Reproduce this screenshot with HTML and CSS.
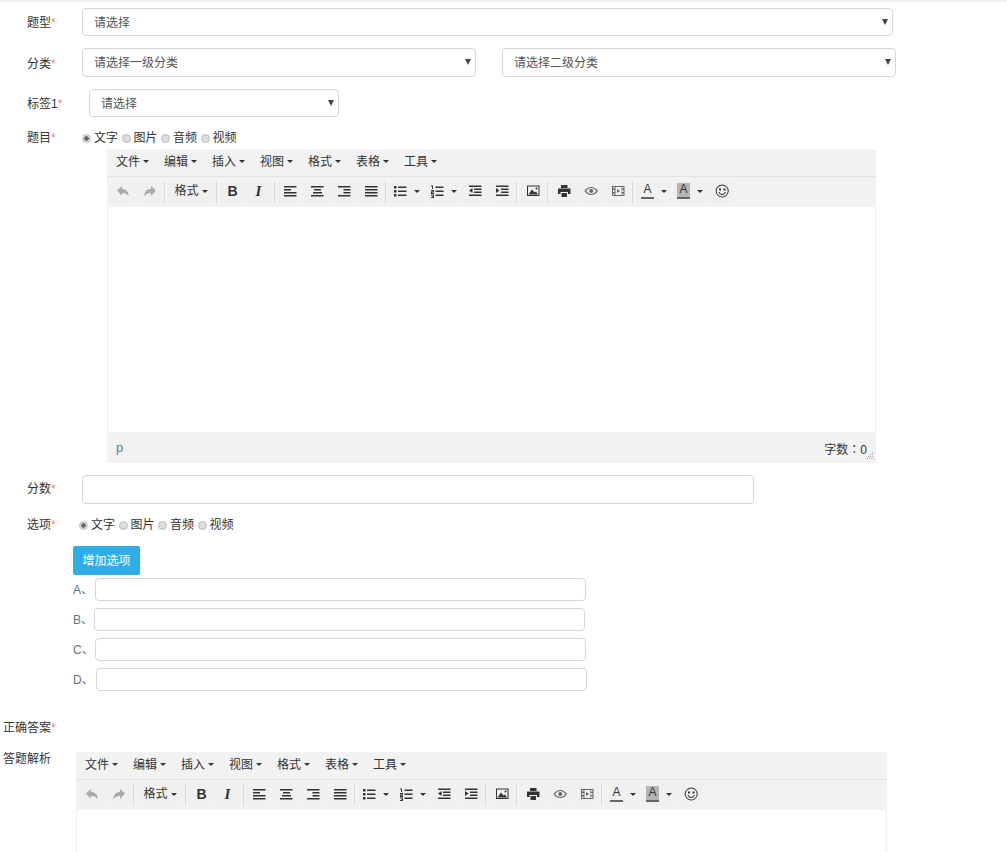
FILE: index.html
```html
<!DOCTYPE html>
<html lang="en">
<head>
  <meta charset="UTF-8">
  <title>添加题目</title>
  <link rel="stylesheet" href="styles.css">
</head>
<body>

  <svg class="sprite" xmlns="http://www.w3.org/2000/svg">
    <symbol id="i-undo" viewBox="0 0 16 16"><path d="M2 7.5 7 3v3c4 0 7 2.500 6.500 7.500C12.500 11 10.500 10 7 10v3z"/></symbol>
    <symbol id="i-redo" viewBox="0 0 16 16"><path d="M14 7.500 9 3v3c-4 0-7 2.500-6.500 7.500C3.500 11 5.500 10 9 10v3z"/></symbol>
    <symbol id="i-left" viewBox="0 0 16 16"><path d="M2 3h12.500v1.500H2zM2 6h7v1.500H2zM2 9h12.500v1.500H2zM2 12h12.500v1.500H2z"/></symbol>
    <symbol id="i-center" viewBox="0 0 16 16"><path d="M2 3h12.500v1.500H2zM5 6h7v1.500H5zM4 9h9v1.500H4zM2 12h12.500v1.500H2z"/></symbol>
    <symbol id="i-right" viewBox="0 0 16 16"><path d="M2 3h12.500v1.500H2zM7.500 6h7v1.500h-7zM7.500 9h7v1.500h-7zM2 12h12.500v1.500H2z"/></symbol>
    <symbol id="i-justify" viewBox="0 0 16 16"><path d="M2 3h12.500v1.500H2zM2 6h12.500v1.500H2zM2 9h12.500v1.500H2zM2 12h12.500v1.500H2z"/></symbol>
    <symbol id="i-bullet" viewBox="0 0 16 16"><path d="M2 3h2.500v2.500H2zM2 7h2.500v2.500H2zM2 11h2.500v2.500H2zM6 3.500h8.500V5H6zM6 7.500h8.500V9H6zM6 11.500h8.500V13H6z"/></symbol>
    <symbol id="i-number" viewBox="0 0 16 16"><path d="M2 2.500h2v3.500H3V3.500H2zM2 7h3v2.500H3v.5h2v1H2V8.500h2V8H2zM2 11.500h3V15H2v-1h2v-.5H3v-.5h1v-.5H2zM6.500 3.500h8V5h-8zM6.500 7.500h8V9h-8zM6.500 11.500h8V13h-8z"/></symbol>
    <symbol id="i-outdent" viewBox="0 0 16 16"><path d="M2 2.500h12.500V4H2zM7 5.500h7.500V7H7zM7 8.500h7.500V10H7zM2 11.500h12.500V13H2zM5.500 5v5L2 7.500z"/></symbol>
    <symbol id="i-indent" viewBox="0 0 16 16"><path d="M2 2.500h12.500V4H2zM7 5.500h7.500V7H7zM7 8.500h7.500V10H7zM2 11.500h12.500V13H2zM2 5v5l3.500-2.500z"/></symbol>
    <symbol id="i-image" viewBox="0 0 16 16"><path fill-rule="evenodd" d="M2 2.500h12.500V13H2zM3 3.500V12h10.500V3.500z"/><path d="M3.500 11.500 7 6.500l2.500 3 1.500-1 2 3z"/><circle cx="11.500" cy="5.500" r="1"/></symbol>
    <symbol id="i-print" viewBox="0 0 16 16"><path fill-rule="evenodd" d="M5 2h6.500v3H5zM2 5.500h12.500V11H12V9H4.500v2H2zM5.500 10h5.500v4H5.500z"/></symbol>
    <symbol id="i-eye" viewBox="0 0 16 16"><path fill-rule="evenodd" d="M1.500 8C3.500 5 6 4 8.200 4s4.800 1 6.800 4c-2 3-4.600 4-6.800 4S3.500 11 1.500 8zM3 8c1.500 2 3.300 3 5.200 3s3.800-1 5.300-3c-1.500-2-3.400-3-5.300-3S4.500 6 3 8z"/><circle cx="8.200" cy="8" r="2"/></symbol>
    <symbol id="i-media" viewBox="0 0 16 16"><path fill-rule="evenodd" d="M2 3h12.500v10H2zM3 4v1.500h1.500V4zM3 7v2h1.500V7zM3 10.500V12h1.500v-1.500zM12 4v1.500h1.500V4zM12 7v2h1.500V7zM12 10.500V12h1.500v-1.500zM5.500 4v8h6V4z"/><path d="M7 6v4l3-2z"/></symbol>
    <symbol id="i-smile" viewBox="0 0 16 16"><path fill-rule="evenodd" d="M8.200 1.500a6.500 6.500 0 1 1 0 13 6.500 6.500 0 0 1 0-13zM8.200 2.500a5.500 5.500 0 1 0 0 11 5.500 5.500 0 0 0 0-11z"/><path d="M5 5.500h2V7.500H5zM9.500 5.500h2V7.500h-2zM4.500 9h1c.5 1.300 1.500 2 2.700 2s2.200-.7 2.700-2h1c-.5 2-2 3-3.700 3s-3.200-1-3.700-3z"/></symbol>
  </svg>

  <div class="top-shadow"></div>

  <form class="form">
    <div class="row row-select">
      <label class="lab">题型<i>*</i></label>
      <div class="sel sel-full"><select><option>请选择</option></select></div>
    </div>

    <div class="row row-select row-tall">
      <label class="lab">分类<i>*</i></label>
      <div class="sel sel-half"><select><option>请选择一级分类</option></select></div>
      <div class="sel sel-half sel-second"><select><option>请选择二级分类</option></select></div>
    </div>

    <div class="row row-select">
      <label class="lab lab-wide">标签1<i>*</i></label>
      <div class="sel sel-small"><select><option>请选择</option></select></div>
    </div>

    <div class="row row-radio">
      <label class="lab">题目<i>*</i></label>
      <div class="radios">
        <input type="radio" name="q" checked><span>文字</span>
        <input type="radio" name="q"><span>图片</span>
        <input type="radio" name="q"><span>音频</span>
        <input type="radio" name="q"><span>视频</span>
      </div>
    </div>

    <div class="editor editor-question">
      <div class="menubar">
        <span class="menu">文件<b class="caret"></b></span>
        <span class="menu">编辑<b class="caret"></b></span>
        <span class="menu">插入<b class="caret"></b></span>
        <span class="menu">视图<b class="caret"></b></span>
        <span class="menu">格式<b class="caret"></b></span>
        <span class="menu">表格<b class="caret"></b></span>
        <span class="menu">工具<b class="caret"></b></span>
      </div>
      <div class="toolbar">
        <div class="group">
          <span class="btn off"><svg><use href="#i-undo"/></svg></span>
          <span class="btn off"><svg><use href="#i-redo"/></svg></span>
        </div>
        <div class="group">
          <span class="btn btn-format">格式<b class="caret"></b></span>
        </div>
        <div class="group group-tight">
          <span class="btn btn-b">B</span>
          <span class="btn btn-i">I</span>
        </div>
        <div class="group">
          <span class="btn"><svg><use href="#i-left"/></svg></span>
          <span class="btn"><svg><use href="#i-center"/></svg></span>
          <span class="btn"><svg><use href="#i-right"/></svg></span>
          <span class="btn"><svg><use href="#i-justify"/></svg></span>
        </div>
        <div class="group">
          <span class="btn btn-split"><svg><use href="#i-bullet"/></svg><b class="caret"></b></span>
          <span class="btn btn-split"><svg><use href="#i-number"/></svg><b class="caret"></b></span>
          <span class="btn"><svg><use href="#i-outdent"/></svg></span>
          <span class="btn"><svg><use href="#i-indent"/></svg></span>
        </div>
        <div class="group">
          <span class="btn"><svg><use href="#i-image"/></svg></span>
        </div>
        <div class="group group-wide">
          <span class="btn"><svg><use href="#i-print"/></svg></span>
          <span class="btn soft"><svg><use href="#i-eye"/></svg></span>
          <span class="btn soft"><svg><use href="#i-media"/></svg></span>
        </div>
        <div class="group group-last">
          <span class="btn btn-color"><span class="fore">A</span><b class="caret"></b></span>
          <span class="btn btn-color"><span class="back">A</span><b class="caret"></b></span>
          <span class="btn"><svg><use href="#i-smile"/></svg></span>
        </div>
      </div>
      <div class="edit-area"></div>
      <div class="statusbar">
        <span class="path">p</span>
        <span class="count">字数：0</span>
        <svg class="resize" viewBox="0 0 7 7"><path d="M5 0h1v1H5zM3 2h1v1H3zM5 2h1v1H5zM1 4h1v1H1zM3 4h1v1H3zM5 4h1v1H5zM0 6h1v1H0zM2 6h1v1H2zM4 6h1v1H4zM6 6h1v1H6z"/></svg>
      </div>
    </div>

    <div class="row row-score">
      <label class="lab">分数<i>*</i></label>
      <input class="text score" type="text">
    </div>

    <div class="row row-radio row-options">
      <label class="lab">选项<i>*</i></label>
      <div class="radios radios-options">
        <input type="radio" name="o" checked><span>文字</span>
        <input type="radio" name="o"><span>图片</span>
        <input type="radio" name="o"><span>音频</span>
        <input type="radio" name="o"><span>视频</span>
      </div>
    </div>

    <div class="options">
      <button class="add" type="button">增加选项</button>
      <div class="option"><span>A、</span><input class="text" type="text"></div>
      <div class="option option-near"><span>B、</span><input class="text" type="text"></div>
      <div class="option option-near"><span>C、</span><input class="text" type="text"></div>
      <div class="option"><span>D、</span><input class="text" type="text"></div>
    </div>

    <div class="answer">正确答案<i>*</i></div>

    <div class="analysis">
      <div class="analysis-lab">答题解析</div>
      <div class="editor editor-analysis">
        <div class="menubar">
          <span class="menu">文件<b class="caret"></b></span>
          <span class="menu">编辑<b class="caret"></b></span>
          <span class="menu">插入<b class="caret"></b></span>
          <span class="menu">视图<b class="caret"></b></span>
          <span class="menu">格式<b class="caret"></b></span>
          <span class="menu">表格<b class="caret"></b></span>
          <span class="menu">工具<b class="caret"></b></span>
        </div>
        <div class="toolbar">
          <div class="group">
            <span class="btn off"><svg><use href="#i-undo"/></svg></span>
            <span class="btn off"><svg><use href="#i-redo"/></svg></span>
          </div>
          <div class="group">
            <span class="btn btn-format">格式<b class="caret"></b></span>
          </div>
          <div class="group group-tight">
            <span class="btn btn-b">B</span>
            <span class="btn btn-i">I</span>
          </div>
          <div class="group">
            <span class="btn"><svg><use href="#i-left"/></svg></span>
            <span class="btn"><svg><use href="#i-center"/></svg></span>
            <span class="btn"><svg><use href="#i-right"/></svg></span>
            <span class="btn"><svg><use href="#i-justify"/></svg></span>
          </div>
          <div class="group">
            <span class="btn btn-split"><svg><use href="#i-bullet"/></svg><b class="caret"></b></span>
            <span class="btn btn-split"><svg><use href="#i-number"/></svg><b class="caret"></b></span>
            <span class="btn"><svg><use href="#i-outdent"/></svg></span>
            <span class="btn"><svg><use href="#i-indent"/></svg></span>
          </div>
          <div class="group">
            <span class="btn"><svg><use href="#i-image"/></svg></span>
          </div>
          <div class="group group-wide">
            <span class="btn"><svg><use href="#i-print"/></svg></span>
            <span class="btn soft"><svg><use href="#i-eye"/></svg></span>
            <span class="btn soft"><svg><use href="#i-media"/></svg></span>
          </div>
          <div class="group group-last">
            <span class="btn btn-color"><span class="fore">A</span><b class="caret"></b></span>
            <span class="btn btn-color"><span class="back">A</span><b class="caret"></b></span>
            <span class="btn"><svg><use href="#i-smile"/></svg></span>
          </div>
        </div>
        <div class="edit-area"></div>
      </div>
    </div>
  </form>

</body>
</html>
```

FILE: styles.css
```css
html, body {
  margin: 0;
  height: 852px;
  overflow: hidden;
}
body {
  background: #fff;
  color: #333;
  font: 12px/20px "Liberation Sans", "Noto Sans CJK SC", sans-serif;
}
.sprite {
  display: none;
}
.top-shadow {
  height: 3px;
  background: linear-gradient(#ececec, #fff);
}
.form {
  padding-top: 5px;
}
i {
  font-style: normal;
  color: #f77;
}

/* rows */
.row {
  display: flex;
  align-items: center;
}
.row-select {
  height: 28px;
  margin-bottom: 12px;
}
.row-tall {
  height: 29px;
}
.lab {
  width: 55px;
  padding-left: 27px;
  flex: none;
}
.row-select .lab {
  padding-top: 2px;
}
.lab-wide {
  width: 62px;
}
.sel {
  position: relative;
  height: 100%;
}
.sel::after {
  content: "";
  position: absolute;
  right: 5px;
  top: 11px;
  border: 3.500px solid transparent;
  border-top: 6px solid #444;
  border-bottom: 0;
}
.sel select {
  appearance: none;
  width: 100%;
  height: 100%;
  padding: 2px 12px 0 11px;
  background: #fff;
  border: 1px solid #d6d6d6;
  border-radius: 4px;
  color: #555;
  font: inherit;
}
.row-tall select {
  padding-top: 0;
}
.sel-full {
  width: 811px;
}
.sel-half {
  width: 394px;
}
.sel-second {
  margin-left: 26px;
}
.sel-small {
  width: 250px;
}

/* radios */
.row-radio {
  height: 20px;
  margin-top: -1px;
}
.radios {
  display: flex;
  align-items: center;
}
.radios input {
  appearance: none;
  width: 9px;
  height: 9px;
  margin: 0 3px 0 0;
  border: 1px solid #bbb;
  border-radius: 50%;
  background: #ddd;
}
.radios input:checked {
  background: radial-gradient(circle, #666 0 2px, #ddd 2.500px);
}
.radios span {
  margin-right: 3.500px;
}
.radios-options {
  margin-left: -3px;
}

/* editor */
.editor {
  border-left: 1px solid #eee;
  border-right: 1px solid #eee;
  box-sizing: border-box;
}
.editor-question {
  width: 769px;
  margin: 1px 0 12px 107px;
}
.menubar {
  display: flex;
  height: 25px;
  align-items: center;
  background: #f2f2f2;
  border-bottom: 1px solid #e2e2e2;
  margin: 0 -1px;
  padding: 0 0 2px 1px;
}
.menu {
  display: flex;
  align-items: center;
  width: 48px;
  padding-left: 8px;
  box-sizing: border-box;
  flex: none;
}
.caret {
  width: 0;
  height: 0;
  margin-left: 3px;
  border: 3px solid transparent;
  border-top-color: #333;
  border-bottom: 0;
}
.toolbar {
  display: flex;
  align-items: center;
  height: 30px;
  background: #f2f2f2;
  margin: 0 -1px;
  padding-left: 3px;
}
.group {
  display: flex;
  gap: 2px;
  height: 22px;
  padding-right: 2px;
  margin-right: 3px;
  border-right: 1px solid #d9d9d9;
}
.group-tight {
  margin-right: 2px;
}
.group-wide {
  margin-right: 4px;
}
.group-last {
  border-right: 0;
}
.btn {
  display: flex;
  align-items: center;
  justify-content: center;
  width: 25px;
  height: 22px;
  padding-bottom: 2px;
  box-sizing: border-box;
  background: #f0f0f0;
  color: #333;
}
.btn svg {
  width: 16px;
  height: 16px;
  fill: #333;
}
.off svg {
  fill: #aaa;
}
.soft svg {
  fill: #666;
}
.btn-format {
  width: 46px;
}
.btn-b {
  font: bold 14px "Liberation Sans", sans-serif;
}
.btn-i {
  padding-right: 2px;
  font: italic bold 15px "Liberation Serif", serif;
}
.btn-split {
  width: 34.500px;
  justify-content: flex-start;
  padding-left: 3px;
}
.btn-split .caret {
  margin-left: 6px;
}
.btn-color {
  width: 34px;
  justify-content: flex-start;
  padding-left: 4px;
}
.btn-color .caret {
  margin-left: 7px;
}
.fore, .back {
  width: 13px;
  height: 14px;
  font: 12px/13px "Liberation Sans", sans-serif;
  text-align: center;
  border-bottom: 2px solid #666;
}
.back {
  background: #b5b5b5;
}
.edit-area {
  height: 225px;
  background: #fff;
}
.statusbar {
  display: flex;
  justify-content: space-between;
  position: relative;
  height: 31px;
  background: #f2f2f2;
  margin: 0 -1px;
  padding: 6px 9px 0;
  box-sizing: border-box;
}
.path {
  color: #5d7a94;
  font-size: 13px;
}
.count {
  margin-top: 2px;
  font-family: "Liberation Sans", "Noto Sans CJK TC", sans-serif;
}
.resize {
  position: absolute;
  right: 2px;
  bottom: 4px;
  width: 7px;
  height: 7px;
  fill: #aaa;
}

/* score and options */
.row-score {
  height: 29px;
  margin-bottom: 12px;
}
.row-score .lab {
  padding-bottom: 2px;
}
.text {
  height: 100%;
  box-sizing: border-box;
  background: #fff;
  border: 1px solid #d6d6d6;
  border-radius: 4px;
}
.score {
  width: 672px;
}
.options {
  margin: 11px 0 0 73px;
}
.add {
  display: block;
  width: 67px;
  height: 29px;
  padding: 0;
  background: #2eaee8;
  border: 0;
  border-radius: 2px;
  color: #fff;
  font: inherit;
  margin-bottom: 3px;
}
.option {
  display: flex;
  align-items: center;
  height: 23px;
  margin-bottom: 7px;
  color: #5c7287;
}
.option .text {
  width: 491px;
  margin-left: 2px;
}
.option-near .text {
  margin-left: 1px;
}
.answer {
  margin-top: 27px;
  padding-left: 3px;
}
.analysis {
  position: relative;
  margin-top: 14px;
}
.analysis-lab {
  position: absolute;
  left: 3px;
  top: -3px;
}
.editor-analysis {
  width: 811px;
  margin-left: 76px;
}
```
